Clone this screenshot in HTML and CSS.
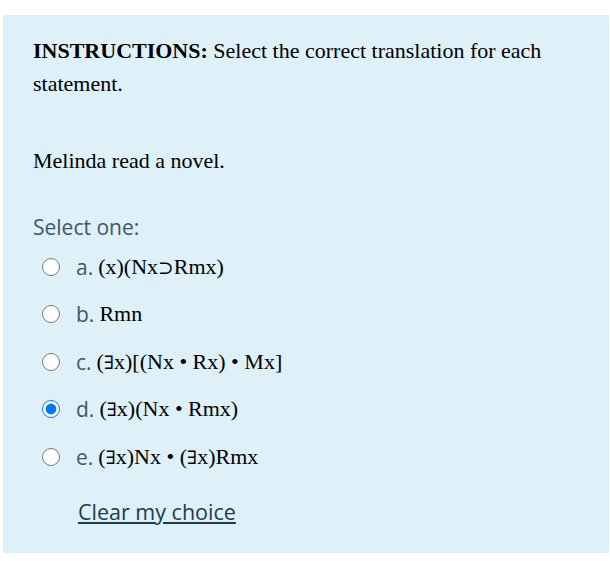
FILE: index.html
```html
<!DOCTYPE html>
<html>
<head>
<meta charset="utf-8">
<link rel="stylesheet" href="styles.css">
</head>
<body>
<div class="panel">
  <p class="qtext"><b>INSTRUCTIONS:</b> Select the correct translation for each statement.</p>
  <p class="qtext stmt">Melinda read a novel.</p>
  <div class="prompt">Select one:</div>
  <div class="answers">
    <label class="opt"><input type="radio" name="q"><span class="num">a.</span><span class="f">(x)(Nx<span class="op">⊃</span>Rmx)</span></label>
    <label class="opt"><input type="radio" name="q"><span class="num">b.</span><span class="f">Rmn</span></label>
    <label class="opt"><input type="radio" name="q"><span class="num">c.</span><span class="f">(<span class="op">∃</span>x)[(Nx • Rx) • Mx]</span></label>
    <label class="opt"><input type="radio" name="q" checked><span class="num">d.</span><span class="f">(<span class="op">∃</span>x)(Nx • Rmx)</span></label>
    <label class="opt"><input type="radio" name="q"><span class="num">e.</span><span class="f">(<span class="op">∃</span>x)Nx • (<span class="op">∃</span>x)Rmx</span></label>
  </div>
  <a class="clear" href="#">Clear my choice</a>
</div>
</body>
</html>
```
FILE: styles.css
```css
html, body {
  margin: 0;
  padding: 0;
  background: #fff;
}
body {
  padding: 15px 1px 0 3px;
}
.panel {
  background: #def1f8;
  padding: 19px 30px 26px 30px;
  display: flex;
  flex-direction: column;
  align-items: flex-start;
}
.qtext {
  margin: 0;
  font-family: "Liberation Serif", "DejaVu Serif", serif;
  font-size: 22px;
  line-height: 33px;
  color: #000;
}
.stmt {
  margin-top: 44px;
}
.prompt {
  margin-top: 35px;
  margin-bottom: 1px;
  font-family: "Open Sans", "Noto Sans", sans-serif;
  font-size: 21px;
  line-height: 30px;
  color: #3d5868;
}
.answers {
  display: flex;
  flex-direction: column;
}
.opt {
  display: flex;
  align-items: center;
  height: 47.5px;
  padding-left: 9px;
}
.opt input {
  width: 18px;
  height: 18px;
  margin: 0 16px 0 0;
}
.num {
  font-family: "Open Sans", "Noto Sans", sans-serif;
  font-size: 21px;
  color: #3d5868;
  margin-right: 5px;
}
.f {
  font-family: "Liberation Serif", "DejaVu Serif", serif;
  font-size: 22px;
  color: #000;
}
.op {
  font-size: 0.85em;
}
.clear {
  margin: 16px 0 0 45px;
  font-family: "Open Sans", "Noto Sans", sans-serif;
  font-size: 21.5px;
  line-height: 30px;
  color: #1c3c4c;
  text-decoration: underline;
}
```
